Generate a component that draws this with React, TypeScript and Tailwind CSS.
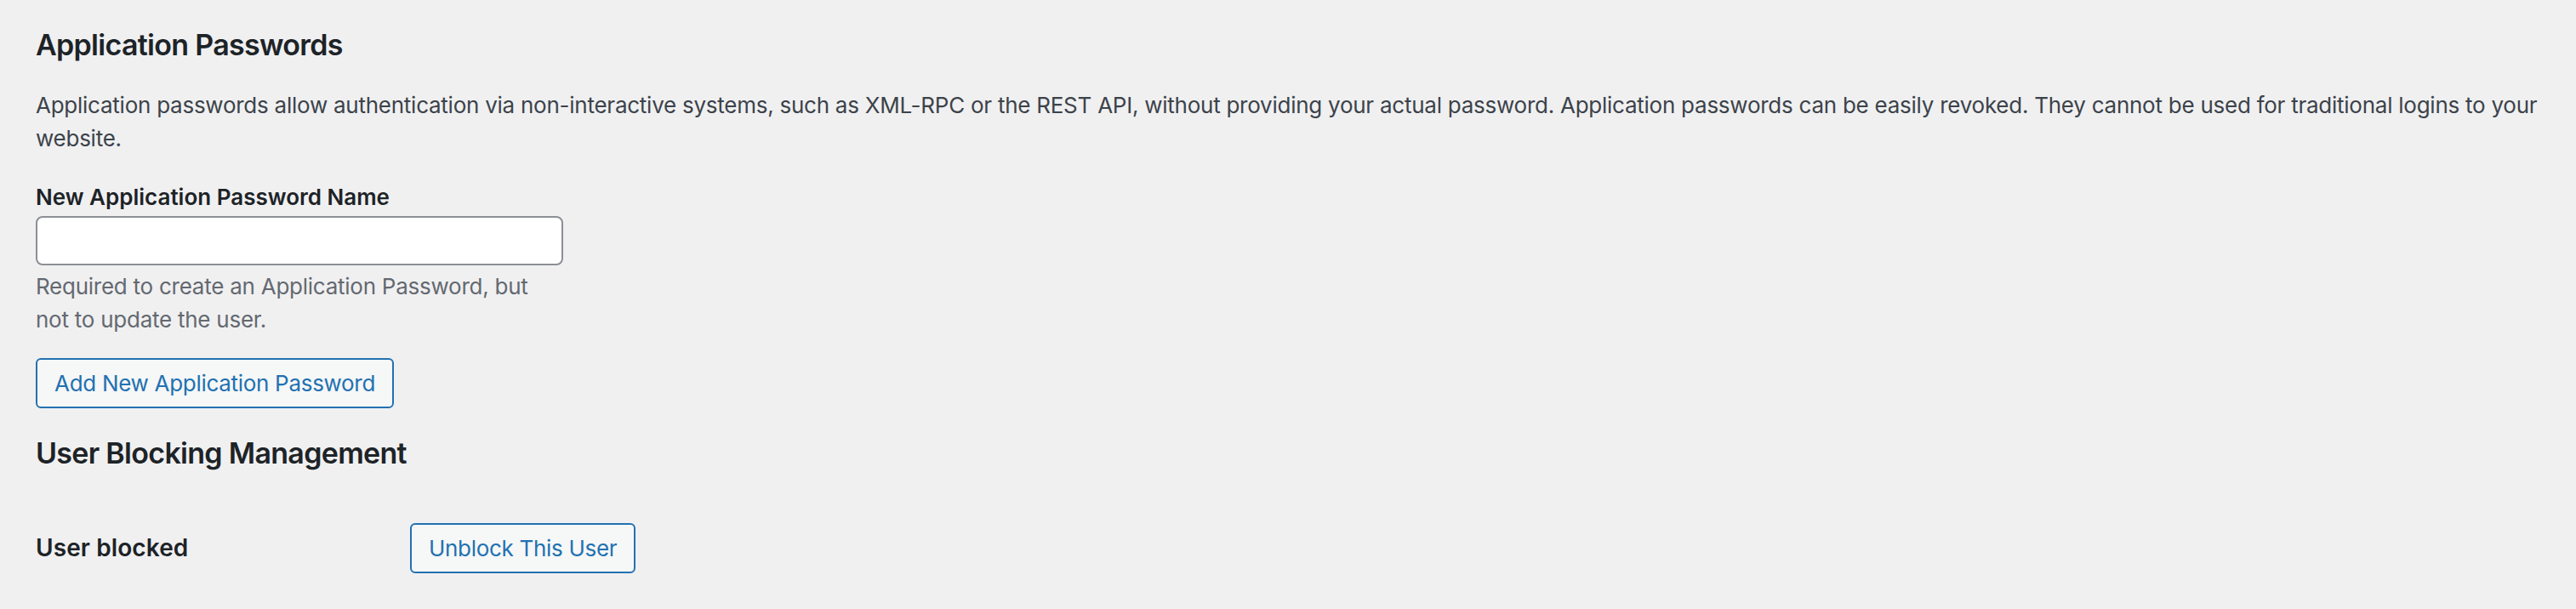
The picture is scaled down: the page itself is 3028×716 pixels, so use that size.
import React from "react";

export default function App() {
  return (
    <div className="min-h-[716px] w-full bg-[#f0f0f1] font-[family-name:Inter,sans-serif] text-[#3c434a]">
      <div className="pl-[42px] pr-[20px] pt-[31px]">
        <h2 className="text-[34px] leading-[44px] font-semibold tracking-[-0.7px] text-[#1d2327]">Application Passwords</h2>
        <p className="mt-[29px] text-[26px] leading-[39px] tracking-[-0.25px]">
          <span className="whitespace-nowrap">
            Application passwords allow authentication via non-interactive systems, such as XML-RPC or the REST API, without providing your actual password. Application passwords can be easily revoked. They cannot be used for traditional logins to your
          </span>
          <br />
          website.
        </p>
        <div className="mt-[30px]">
          <label htmlFor="new-app-pass" className="block text-[26px] leading-[39px] font-semibold text-[#1d2327]">
            New Application Password Name
          </label>
          <input
            id="new-app-pass"
            type="text"
            className="mt-[3px] block h-[58px] w-[620px] rounded-[8px] border-2 border-[#8c8f94] bg-white px-[16px] text-[26px] outline-none"
          />
          <p className="mt-[5px] text-[26px] leading-[39px] tracking-[-0.25px] text-[#646970]">
            Required to create an Application Password, but
            <br />
            not to update the user.
          </p>
          <button className="mt-[26px] h-[59px] rounded-[6px] border-2 border-[#2271b1] bg-[#f6f7f7] px-[20px] text-[26px] leading-[55px] tracking-[-0.3px] text-[#2271b1]">
            Add New Application Password
          </button>
        </div>
        <h2 className="mt-[31px] text-[34px] leading-[44px] font-semibold tracking-[-0.7px] text-[#1d2327]">User Blocking Management</h2>
        <div className="mt-[60px] flex items-center">
          <div className="w-[440px] text-[28px] leading-[39px] font-semibold tracking-[0.1px] text-[#1d2327]">User blocked</div>
          <button className="h-[59px] rounded-[6px] border-2 border-[#2271b1] bg-[#f6f7f7] px-[20px] text-[26px] leading-[55px] tracking-[-0.3px] text-[#2271b1]">
            Unblock This User
          </button>
        </div>
      </div>
    </div>
  );
}
